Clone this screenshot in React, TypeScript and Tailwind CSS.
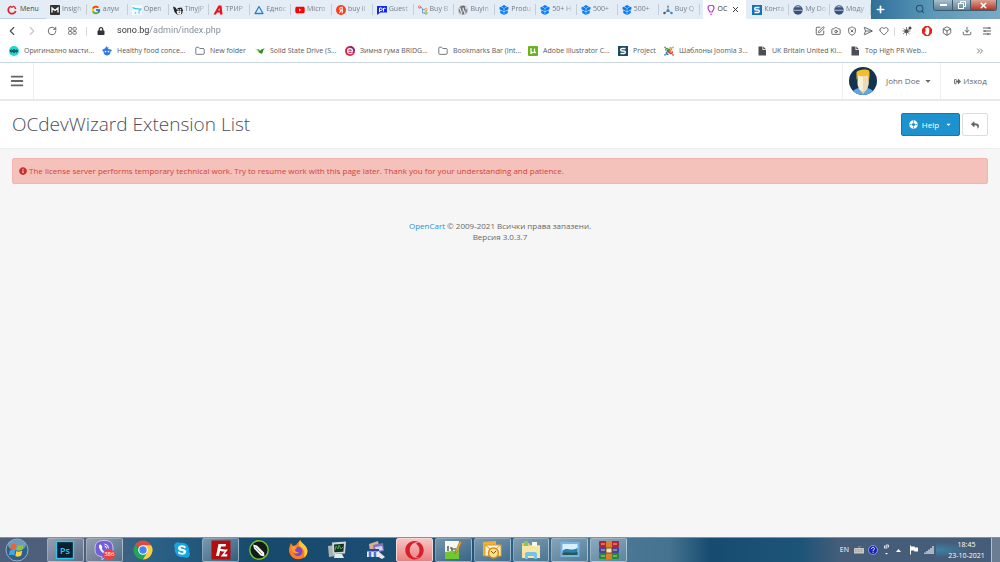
import type { ReactNode } from 'react'
import { FcGoogle } from 'react-icons/fc'
import {
    FaBars,
    FaCaretDown,
    FaInfoCircle,
    FaLock,
    FaOpera,
    FaReply,
    FaSignOutAlt,
    FaSkype,
    FaWordpress,
    FaYoutube,
} from 'react-icons/fa'
import {
    Box,
    Camera,
    ChevronLeft,
    ChevronRight,
    ChevronsRight,
    Download,
    Folder,
    Heart,
    Plus,
    RotateCw,
    Search,
    SendHorizontal,
    ShieldX,
    SquarePen,
    X,
} from 'lucide-react'

const icon = 'w-[10px] h-[10px] shrink-0'

/* ---------- favicons ---------- */

const OperaMenu = () => (
    <svg viewBox="0 0 20 20" className={icon}>
        <path d="M8 2.500A7.600 7.600 0 1 0 17.400 12" fill="none" stroke="#e0222e" strokeWidth="3.400" />
        <path d="M12 2.300a7.600 7.600 0 0 1 5.400 6" fill="none" stroke="#e0222e" strokeWidth="3" />
        <circle cx="10" cy="4" r="2" fill="#e0222e" />
    </svg>
)

const Insight = () => (
    <svg viewBox="0 0 20 20" className={icon}>
        <rect width="20" height="20" rx="2" fill="#333" />
        <path d="M4 15V6l6 5 6-5v9" fill="none" stroke="#fff" strokeWidth="2.600" />
    </svg>
)

const OpenCart = () => (
    <svg viewBox="0 0 20 20" className={icon}>
        <rect width="20" height="20" fill="#f4fbfe" />
        <path d="M1 5c4 3 9 3 17 3-1 2-3 3-5 5" fill="none" stroke="#35c1ee" strokeWidth="2.200" />
        <circle cx="7" cy="16" r="1.600" fill="#35c1ee" />
        <circle cx="14" cy="16" r="1.600" fill="#35c1ee" />
    </svg>
)

const Tiny = () => (
    <svg viewBox="0 0 20 20" className={icon}>
        <path d="M0 3l5 2 2 4 3-3 7-1 3 5-2 8-10 1-5-5z" fill="#222" />
        <path d="M7 13c2-2 8-2 10 0l-1 5H9z" fill="#fff" />
        <circle cx="10" cy="9.500" r="1.500" fill="#fff" />
        <circle cx="15" cy="9.500" r="1.500" fill="#fff" />
        <circle cx="12.500" cy="14.500" r="1.300" fill="#222" />
    </svg>
)

const RedA = () => (
    <svg viewBox="0 0 20 20" className={icon}>
        <path d="M1 19L11 1h6l2 18h-5l-.4-4H8l-2 4zm9-8h3.400L13 6z" fill="#e8121d" fillRule="evenodd" />
    </svg>
)

const Triangle = () => (
    <svg viewBox="0 0 20 20" className={icon}>
        <path d="M10 3l8 14H2z" fill="none" stroke="#2d7fd0" strokeWidth="2.600" strokeLinejoin="round" />
    </svg>
)

const Yandex = () => (
    <svg viewBox="0 0 20 20" className={icon}>
        <circle cx="10" cy="10" r="10" fill="#fc3f1d" />
        <path d="M12.500 16V4.500h-2c-4 0-4 6 0 6h2M10 10.500L7 16" fill="none" stroke="#fff" strokeWidth="2.200" />
    </svg>
)

const GuestPost = () => (
    <svg viewBox="0 0 20 20" className={icon}>
        <path d="M0 2h20v13H6l-4 4H0z" fill="#1527f5" />
        <path d="M5 14V6h3a2.300 2.300 0 0 1 0 5H6m7 2V6m0 2c1-2 3-2 4-1" fill="none" stroke="#fff" strokeWidth="2" />
    </svg>
)

const Tree = () => (
    <svg viewBox="0 0 20 20" className={icon}>
        <path d="M3 5c5 0 6 0 6 5v6h5M9 9h5" fill="none" stroke="#5b94cf" strokeWidth="1.800" />
        <circle cx="3" cy="4" r="2.500" fill="none" stroke="#e3646c" strokeWidth="1.600" />
        <circle cx="16" cy="9" r="2.500" fill="none" stroke="#e59638" strokeWidth="1.600" />
        <circle cx="16" cy="16" r="2.500" fill="none" stroke="#64b057" strokeWidth="1.600" />
    </svg>
)

const Cube = () => (
    <svg viewBox="0 0 20 20" className={icon}>
        <path d="M10 0l5.500 3L10 6.500 4.500 3z" fill="#0a7cf2" />
        <path d="M1 4.500l2.500-1L9.500 7v6L5 10.500 1 8.500z" fill="#0a7cf2" />
        <path d="M19 4.500l-2.500-1L10.500 7v6l4.500-2.500 4-2z" fill="#0a7cf2" />
        <path d="M2.500 10.500l7 3.500v6l-7-4zM17.500 10.500l-7 3.500v6l7-4z" fill="#0a7cf2" />
    </svg>
)

const Molecule = () => (
    <svg viewBox="0 0 20 20" className={icon}>
        <path d="M10 3v8l-7 5m7-5l7 5" fill="none" stroke="#7f8a94" strokeWidth="1.600" />
        <circle cx="10" cy="3" r="2" fill="#7f8a94" />
        <circle cx="10" cy="11" r="3" fill="#3b88c4" />
        <circle cx="3" cy="16" r="2.500" fill="#505a63" />
        <circle cx="17" cy="16" r="2.500" fill="#3b88c4" />
    </svg>
)

const Bulb = () => (
    <svg viewBox="0 0 20 20" className={icon}>
        <path d="M7.500 14c0-3-3.500-4-3.500-8a6 5.500 0 0 1 12 0c0 4-3.500 5-3.500 8zM8 18.500h4" fill="none" stroke="#c13bd3" strokeWidth="2.400" />
    </svg>
)

const LetterS = ({ color }: { color: string }) => (
    <svg viewBox="0 0 20 20" className={icon}>
        <rect width="20" height="20" fill={color} />
        <path d="M15 5H8C4.500 5 4.500 10 8 10h4c3.500 0 3.500 5 0 5H5" fill="none" stroke="#fff" strokeWidth="2.800" />
    </svg>
)

const Globe = () => (
    <svg viewBox="0 0 20 20" className={icon}>
        <circle cx="10" cy="10" r="9.500" fill="#39507c" />
        <path d="M3 5c4-4 10-4 13 0-4-1-9-1-13 0z" fill="#a9b8d4" />
        <path d="M1 10.500h18" stroke="#c4cfe4" strokeWidth="1.800" />
    </svg>
)

const Healthy = () => (
    <svg viewBox="0 0 20 20" className={icon}>
        <path d="M6 5l3-5 1 3 3-1-1 4 6 1 2 3-3 1c0 5-3 8-7 8s-7-3-7-8L0 9l3-3z" fill="#2f7be0" />
        <circle cx="7" cy="11" r="1.700" fill="#fff" />
        <circle cx="13" cy="11" r="1.700" fill="#fff" />
    </svg>
)

const Ojo = () => (
    <svg viewBox="0 0 20 20" className={icon}>
        <circle cx="10" cy="10" r="10" fill="#1fd8cf" />
        <circle cx="5" cy="10" r="2" fill="none" stroke="#0c2b33" strokeWidth="2" />
        <path d="M10 6v8" stroke="#0c2b33" strokeWidth="2.500" />
        <circle cx="15" cy="10" r="2" fill="none" stroke="#0c2b33" strokeWidth="2" />
    </svg>
)

const Leaf = () => (
    <svg viewBox="0 0 20 20" className={icon}>
        <path d="M0 6c4 0 6 1 8 5L7 14C5 9 3 8 0 6z" fill="#d7d84a" />
        <path d="M4 6c4 0 5 2 6 4 2-4 5-4 10-5-2 2-4 3-4 6s-3 5-5 4C7 14 8 9 4 6z" fill="#2f8f2d" />
    </svg>
)

const Emag = () => (
    <svg viewBox="0 0 20 20" className={icon}>
        <circle cx="10" cy="10" r="10" fill="#dd2340" />
        <path d="M10 0a10 10 0 0 1 10 10H10z" fill="#7c2a86" />
        <path d="M5 10.500h10c0-7-10-7-10 0 0 5 6 6 10 3" fill="none" stroke="#fff" strokeWidth="2.200" />
    </svg>
)

const Torrent = () => (
    <svg viewBox="0 0 20 20" className={icon}>
        <rect width="20" height="20" rx="2" fill="#6ab41e" />
        <path d="M6 4v12M6 11c1 3 6 3 7 0V5v6c0 2 1 2 3 2" fill="none" stroke="#fff" strokeWidth="2.500" />
    </svg>
)

const Joomla = () => (
    <svg viewBox="0 0 20 20" className={icon} fill="none" strokeWidth="3">
        <path d="M4 9c-2-3 2-6 4-3l6 6" stroke="#5aa532" />
        <path d="M11 4c3-2 6 2 3 4l-6 6" stroke="#f9912a" />
        <path d="M16 11c2 3-2 6-4 3L6 8" stroke="#e0402d" />
        <path d="M9 16c-3 2-6-2-3-4l6-6" stroke="#2a80c4" />
        <g strokeWidth="3.500" strokeLinecap="round">
            <path d="M2 2.500h.1" stroke="#5aa532" />
            <path d="M18 2.500h.1" stroke="#f9912a" />
            <path d="M18 17.500h.1" stroke="#e0402d" />
            <path d="M2 17.500h.1" stroke="#2a80c4" />
        </g>
    </svg>
)

const PageFile = () => (
    <svg viewBox="0 0 20 20" className={icon}>
        <path d="M3 1h8v7h7v11H3z" fill="#4b4f54" />
        <path d="M12.500 1L18 6.500h-5.500z" fill="#4b4f54" />
    </svg>
)

const FolderIcon = () => <Folder className="w-[10px] h-[10px] shrink-0 text-[#5a6066]" strokeWidth={2} />

/* ---------- data ---------- */

interface Tab {
    title: string
    icon: ReactNode
    active?: boolean
}

const tabs: Tab[] = [
    { title: 'Insigh', icon: <Insight /> },
    { title: 'алум', icon: <FcGoogle className={icon} /> },
    { title: 'Open', icon: <OpenCart /> },
    { title: 'TinyJP', icon: <Tiny /> },
    { title: 'ТРИР', icon: <RedA /> },
    { title: 'Еднос', icon: <Triangle /> },
    { title: 'Micro', icon: <FaYoutube className="w-[10px] h-[10px] shrink-0 text-[#f00]" /> },
    { title: 'buy li', icon: <Yandex /> },
    { title: 'Guest', icon: <GuestPost /> },
    { title: 'Buy B', icon: <Tree /> },
    { title: 'Buyin', icon: <FaWordpress className="w-[10px] h-[10px] shrink-0 text-[#6c6c6c]" /> },
    { title: 'Produ', icon: <Cube /> },
    { title: '50+ H', icon: <Cube /> },
    { title: '500+', icon: <Cube /> },
    { title: '500+', icon: <Cube /> },
    { title: 'Buy Q', icon: <Molecule /> },
    { title: 'OC', icon: <Bulb />, active: true },
    { title: 'Конта', icon: <LetterS color="#1273b8" /> },
    { title: 'My Do', icon: <Globe /> },
    { title: 'Моду', icon: <Globe /> },
]

const bookmarks = [
    { title: 'Оригинално масти...', icon: <Ojo />, width: 'w-[93px]' },
    { title: 'Healthy food conce...', icon: <Healthy />, width: 'w-[93px]' },
    { title: 'New folder', icon: <FolderIcon />, width: 'w-[60px]' },
    { title: 'Solid State Drive (S...', icon: <Leaf />, width: 'w-[90px]' },
    { title: 'Зимна гума BRIDG...', icon: <Emag />, width: 'w-[93px]' },
    { title: 'Bookmarks Bar (Int...', icon: <FolderIcon />, width: 'w-[90px]' },
    { title: 'Adobe Illustrator C...', icon: <Torrent />, width: 'w-[90px]' },
    { title: 'Project', icon: <LetterS color="#1d4a5c" />, width: 'w-[46px]' },
    { title: 'Шаблоны Joomla 3...', icon: <Joomla />, width: 'w-[93px]' },
    { title: 'UK Britain United Ki...', icon: <PageFile />, width: 'w-[93px]' },
    { title: 'Top High PR Web...', icon: <PageFile />, width: 'w-[93px]' },
]

/* ---------- taskbar icons ---------- */

const task = 'w-[20px] h-[20px]'

const Photoshop = () => (
    <svg viewBox="0 0 20 20" className={task}>
        <rect x="1.500" y="1.500" width="17" height="17" fill="#0b1f2e" stroke="#31c5f0" strokeWidth="1.400" />
        <text x="10" y="13.500" textAnchor="middle" fontSize="9" fontWeight="600" fill="#31c5f0">Ps</text>
    </svg>
)

const Viber = () => (
    <span className="relative">
        <svg viewBox="0 0 20 20" className={task}>
            <path d="M10 .5c6 0 9 2 9 8.500 0 6-3 8-8 8l-3 3v-3.300C3 16 1 14 1 9 1 2.500 4 .5 10 .5z" fill="#7360d6" stroke="#ddd8f8" strokeWidth=".8" />
            <path d="M6 4.500c-2 1-1 4 1.500 7s5 4 6.500 2c1-1-2-3-3-2-1 .8-4-3-3-3.500C9 7 7 4 6 4.500z" fill="#fff" />
            <path d="M10.500 4q4 .5 4 4.500M10.500 6q2 .3 2 2.500" fill="none" stroke="#fff" />
        </svg>
        <span className="absolute left-[9px] top-[10px] h-[9px] px-px rounded-full bg-[#ee3f3f] text-white text-[6px] leading-[9px]">386</span>
    </span>
)

const Chrome = () => (
    <svg viewBox="0 0 20 20" className={task}>
        <path d="M10 10L1.800 5.200A9.500 9.500 0 0 1 18.200 5.200z" fill="#dd4b3e" />
        <path d="M10 10V5.200h8.200A9.500 9.500 0 0 1 10 19.500z" fill="#fccd43" />
        <path d="M10 10l4.200 2.400L10 19.500A9.500 9.500 0 0 1 1.800 5.200z" fill="#27a358" />
        <circle cx="10" cy="10" r="4.800" fill="#fff" />
        <circle cx="10" cy="10" r="3.700" fill="#4285f4" />
    </svg>
)

const FileZilla = () => (
    <svg viewBox="0 0 20 20" className={task}>
        <rect x=".5" y=".5" width="19" height="19" fill="#b30d0d" />
        <path d="M5 16L7.500 4H15l-.5 2.500H10L9.500 9h3l-.5 2H9l-1 5z" fill="#fff" />
        <path d="M10.500 9.500h6.500l-3.700 4.800h3.200l-.5 2.200H9.700l4-5h-3.200z" fill="#fff" />
    </svg>
)

const Corel = () => (
    <svg viewBox="0 0 20 20" className={task}>
        <circle cx="10" cy="10" r="9.200" fill="#161a16" stroke="#77c72b" strokeWidth="1.400" />
        <path d="M4 4.500l4 1 7 7 .5 4-4-1-6.500-7z" fill="#f3f3f3" />
        <path d="M6 7l7 7" stroke="#999" strokeWidth="1" />
    </svg>
)

const Firefox = () => (
    <svg viewBox="0 0 20 20" className={task}>
        <path d="M3 3l2 3 3-1c1-2 3-3 4-5 1 3 7 5 7.500 11A9.300 9.300 0 0 1 1 11C.8 8 2 5 3 3z" fill="#ff7a22" />
        <path d="M12 0c1 3 7 5 7.500 11a8 8 0 0 1-4 7c2-5 1-9-4-12C10 4 12 2 12 0z" fill="#ffc935" />
        <circle cx="10" cy="11.500" r="4.500" fill="#7747d8" />
        <path d="M3 7c2-1 5-1 6 1L7 9.500c0 2 2 3 4 2.500-2 3-7 2-8-5z" fill="#ff9a33" />
    </svg>
)

const Monitor = () => (
    <svg viewBox="0 0 20 20" className={task}>
        <path d="M1 6l7-1 1 11-7 1z" fill="#a9b2b4" />
        <path d="M5 2.500l14-1-1 12-12 .5z" fill="#cfd5d4" />
        <path d="M7 4.500l10-.7-.6 8-9 .4z" fill="#173222" />
        <path d="M8 10l1-4 2 3 1-4 2 4 2-2" fill="none" stroke="#43a558" strokeWidth="1" />
        <path d="M8 14h7l2 4H7z" fill="#e6eae8" />
    </svg>
)

const Installer = () => (
    <svg viewBox="0 0 20 20" className={task}>
        <path d="M3 4l9-3 2 9-10 2z" fill="#d7b08f" />
        <path d="M7 5l10-2 1 8-10 2z" fill="#8b71b6" />
        <path d="M9 7l7-1 1 4-7 1z" fill="#c9d7f2" />
        <path d="M1 9h12v8H1z" fill="#e8ebf6" />
        <path d="M1 9h12v2.500H1z" fill="#29469b" />
        <path d="M4 12v5m5-5v5" stroke="#4a76c9" strokeWidth="2.500" />
        <path d="M12 11l7 6-3 2-5-3z" fill="#e9e9ee" />
    </svg>
)

const Notepad = () => (
    <svg viewBox="0 0 20 20" className={task}>
        <rect x="2" y="1" width="14" height="18" fill="#f5f8ee" />
        <path d="M2 12l14-2v9H2z" fill="#70c832" />
        <path d="M5 6v5m2-3h2v3m1-2h3" stroke="#333" strokeWidth="1.200" fill="none" />
        <path d="M17 1l2 1-5 10-2 2 .5-3z" fill="#eaa52e" stroke="#8b5f21" strokeWidth=".5" />
    </svg>
)

const Outlook = () => (
    <svg viewBox="0 0 20 20" className={task}>
        <path d="M1 2l13-1v13L1 16z" fill="#f1b133" />
        <rect x="3" y="5" width="16" height="11" fill="#fff5dd" stroke="#d99b29" />
        <path d="M3 5l8 6 8-6" fill="none" stroke="#d99b29" />
        <circle cx="11.500" cy="13" r="5" fill="#fce08a" stroke="#d98c16" strokeWidth="1.500" />
        <path d="M9 11l2.500 2.500L14 11" fill="none" stroke="#7a4b09" />
    </svg>
)

const Explorer = () => (
    <svg viewBox="0 0 20 20" className={task}>
        <path d="M1 3h7l1 2h10v13H1z" fill="#e9cb6f" />
        <path d="M3 1h4v6H3z" fill="#8fbf61" />
        <path d="M11 2h5v4h-5z" fill="#f7f7f2" />
        <path d="M1 6h18v12H1z" fill="#f8e6a1" />
        <path d="M4 19v-5q0-2 2-2h8q2 0 2 2v5h-3v-3H7v3z" fill="#72c4ea" />
    </svg>
)

const Picture = () => (
    <svg viewBox="0 0 20 20" className={task}>
        <rect x=".5" y="2" width="19" height="15" fill="#78b4e2" />
        <rect x="2.500" y="4" width="15" height="11" fill="#d7efff" />
        <path d="M2.500 11c4-5 7 1 15-3v7h-15z" fill="#2a7fb4" />
        <path d="M2.500 13c5-2 9 1 15-1v3h-15z" fill="#275a48" />
    </svg>
)

const WinRar = () => (
    <svg viewBox="0 0 20 20" className={task}>
        <rect y="1" width="20" height="6" rx="1" fill="#b81f3a" />
        <rect y="7" width="20" height="6" rx="1" fill="#3f45a8" />
        <rect y="13" width="20" height="6" rx="1" fill="#238a3c" />
        <rect x="7" y="1" width="6" height="18" fill="#d9822a" />
        <path d="M2 4h4m8 0h4M2 10h4m8 0h4M2 16h4m8 0h4" stroke="#e6c76b" />
        <rect x="7" y="8" width="6" height="5" fill="#f1e3c2" stroke="#7d4b14" />
    </svg>
)

const apps = [
    { name: 'Photoshop', icon: <Photoshop />, open: true },
    { name: 'Viber', icon: <Viber />, open: true },
    { name: 'Chrome', icon: <Chrome /> },
    { name: 'Skype', icon: <FaSkype className="w-[18px] h-[18px] text-[#18a5e4] bg-[radial-gradient(circle,white_50%,transparent_51%)]" /> },
    { name: 'FileZilla', icon: <FileZilla />, open: true },
    { name: 'CorelDRAW', icon: <Corel /> },
    { name: 'Firefox', icon: <Firefox /> },
    { name: 'Monitor', icon: <Monitor /> },
    { name: 'Installer', icon: <Installer /> },
    { name: 'Opera', icon: <FaOpera className="w-[19px] h-[19px] text-[#d81f2c]" />, alert: true },
    { name: 'Notepad++', icon: <Notepad />, open: true },
    { name: 'Outlook', icon: <Outlook />, open: true },
    { name: 'Explorer', icon: <Explorer />, open: true },
    { name: 'Pictures', icon: <Picture />, open: true },
    { name: 'WinRAR', icon: <WinRar />, open: true },
]

/* ---------- browser ---------- */

const TabStrip = () => (
    <div className="flex h-[19px] text-[7px] bg-[#e4edf5]">
        <button className="flex items-center gap-[3px] w-[46px] pl-[7px] pt-px text-[#3d4650] border-b border-[#bdd3e4]">
            <OperaMenu />
            Menu
        </button>
        <div className="flex flex-1 min-w-0">
            {tabs.map((tab, i) =>
                tab.active ? (
                    <div key={i} className="flex flex-1 min-w-0 items-center gap-[2px] pl-[3px] ml-[3px] mr-[2px] bg-white text-[#333]">
                        {tab.icon}
                        <span className="w-[11px]">{tab.title}</span>
                        <button aria-label="Close tab">
                            <X className="w-[9px] h-[9px] text-[#333]" strokeWidth={2.5} />
                        </button>
                    </div>
                ) : (
                    <div key={i} className="flex flex-1 min-w-0 items-center text-[#6f7b87]">
                        <div className="flex flex-1 min-w-0 items-center gap-[2px] pl-[4px] border-r border-[#c3ced9]">
                            {tab.icon}
                            <span className="flex-1 whitespace-nowrap [mask-image:linear-gradient(to_right,black_50%,transparent)]">
                                {tab.title}
                            </span>
                        </div>
                    </div>
                )
            )}
        </div>
        <div className="flex w-[129px] items-start bg-linear-to-r from-[#2f7099] via-[#5d9abb] to-[#7ba9c2]">
            <button aria-label="New tab" className="p-[4px]">
                <Plus className="w-[11px] h-[11px] text-white" strokeWidth={3.5} />
            </button>
            <button aria-label="Search tabs" className="ml-auto mr-[8px] mt-[4px]">
                <Search className="w-[10px] h-[10px] text-[#25506b]" strokeWidth={2.5} />
            </button>
            <div className="flex h-[11px] mr-[3px] rounded-b-[3px] overflow-hidden border border-t-0 border-[#3d5a6e]">
                <button aria-label="Minimize" className="w-[18px] grid place-items-center bg-linear-to-b from-[#a9bfcd] to-[#5f8199]">
                    <span className="w-[7px] h-[2px] bg-white" />
                </button>
                <button aria-label="Restore" className="w-[18px] grid place-items-center border-l border-[#3d5a6e] bg-linear-to-b from-[#a9bfcd] to-[#5f8199]">
                    <svg viewBox="0 0 8 8" className="w-[8px] h-[8px]" fill="none" stroke="#fff">
                        <path d="M2.500 2.500v-2h5v5h-2" />
                        <rect x=".5" y="2.500" width="5" height="5" />
                    </svg>
                </button>
                <button aria-label="Close" className="w-[26px] grid place-items-center border-l border-[#3d5a6e] bg-linear-to-b from-[#dba296] to-[#b2301b]">
                    <X className="w-[9px] h-[9px] text-white" strokeWidth={4} />
                </button>
            </div>
        </div>
    </div>
)

const tool = 'grid place-items-center w-[16px] h-[20px]'
const toolIcon = 'w-[10px] h-[10px]'

const AddressBar = () => (
    <div className="flex items-center h-[24px] pl-[2px] pr-[3px] text-[#4a5158]">
        <button aria-label="Back" className="w-[20px] grid place-items-center">
            <ChevronLeft className="w-[14px] h-[14px]" />
        </button>
        <button aria-label="Forward" className="w-[20px] grid place-items-center text-[#c3c8cc]">
            <ChevronRight className="w-[14px] h-[14px]" />
        </button>
        <button aria-label="Reload" className="w-[20px] grid place-items-center">
            <RotateCw className="w-[10px] h-[10px]" />
        </button>
        <button aria-label="Speed dial" className="w-[20px] grid place-items-center">
            <svg viewBox="0 0 18 16" className="w-[9px] h-[8px]" fill="none" stroke="currentColor" strokeWidth="1.500">
                <rect x="1" y="1" width="6.500" height="5.500" rx="1.500" />
                <rect x="10" y="1" width="6.500" height="5.500" rx="1.500" />
                <rect x="1" y="9" width="6.500" height="5.500" rx="1.500" />
                <rect x="10" y="9" width="6.500" height="5.500" rx="1.500" />
            </svg>
        </button>
        <span className="w-px h-[9px] mx-[4px] bg-[#d5dade]" />
        <FaLock className="w-[8px] h-[8px] mx-[6px] text-[#333]" />
        <input
            aria-label="Address"
            defaultValue="sono.bg/admin/index.php"
            className="flex-1 min-w-0 ml-[6px] font-['Roboto',sans-serif] text-[9px] text-transparent bg-clip-text bg-[linear-gradient(to_right,#333_32px,#7d8893_32px)] outline-none"
        />
        <button aria-label="Edit page" className={tool}><SquarePen className={toolIcon} /></button>
        <button aria-label="Snapshot" className={tool}><Camera className={toolIcon} /></button>
        <button aria-label="Blocker" className={tool}><ShieldX className={toolIcon} /></button>
        <button aria-label="Send" className={tool}><SendHorizontal className={toolIcon} /></button>
        <button aria-label="Save" className={tool}><Heart className={toolIcon} /></button>
        <span className="w-px h-[9px] mx-[2px] bg-[#d5dade]" />
        <button aria-label="Extension" className="grid place-items-center w-[20px]">
            <svg viewBox="0 0 20 20" className={toolIcon}>
                <path d="M9 2v17M3 5l12 11M2 16L17 4M1 10h16" stroke="#777" strokeWidth="1.800" />
                <circle cx="9" cy="10.500" r="4" fill="#555" />
                <circle cx="16" cy="4" r="3" fill="#444" />
            </svg>
        </button>
        <button aria-label="Ad block" className="grid place-items-center w-[20px]">
            <svg viewBox="0 0 20 20" className={toolIcon}>
                <path d="M6 0h8l6 6v8l-6 6H6l-6-6V6z" fill="#e2231a" />
                <path d="M7 4h1.500V3H10V2h1.500v1H13v1.500h1.500V12c0 4-2 6-4 6-3 0-4-3-5.500-6l2-.5z" fill="#fff" />
            </svg>
        </button>
        <button aria-label="Extensions" className="grid place-items-center w-[20px]"><Box className={toolIcon} /></button>
        <button aria-label="Downloads" className="grid place-items-center w-[20px]"><Download className={toolIcon} /></button>
        <button aria-label="Easy setup" className="grid place-items-center w-[20px]">
            <svg viewBox="0 0 20 20" className={toolIcon} fill="none" stroke="currentColor" strokeWidth="1.800">
                <path d="M2 4h16M2 10h16M2 16h16M14 2v4M6 8v4M12 14v4" />
            </svg>
        </button>
    </div>
)

const BookmarksBar = () => (
    <nav className="flex items-center h-[20px] pl-[9px] pr-[15px] pb-[3px] text-[7px] text-[#555b61] border-b border-[#c9d6e0]">
        {bookmarks.map((b) => (
            <a key={b.title} href="#" className={`flex items-center gap-[5px] whitespace-nowrap ${b.width}`}>
                {b.icon}
                {b.title}
            </a>
        ))}
        <button aria-label="More bookmarks" className="ml-auto">
            <ChevronsRight className="w-[10px] h-[10px]" />
        </button>
    </nav>
)

/* ---------- admin page ---------- */

const Avatar = () => (
    <svg viewBox="0 0 56 56" className="w-[28px] h-[28px]">
        <clipPath id="avatar">
            <circle cx="28" cy="28" r="28" />
        </clipPath>
        <g clipPath="url(#avatar)">
            <rect width="56" height="56" fill="#12344f" />
            <path d="M4 56c2-9 8-12 18-15h12c10 3 16 6 18 15z" fill="#5da6e6" />
            <path d="M20 36h16v8l-8 10-8-10z" fill="#e8cda5" />
            <path d="M17 14h22v18c0 9-5 16-11 16s-11-7-11-16z" fill="#fbeed6" />
            <path d="M28 14h11v18c0 9-5 16-11 16z" fill="#f1d9b5" />
            <path d="M15 26V10c4-5 18-7 25-3 2 5 1 13 0 19l-3-9c-7 2-14 2-19 0z" fill="#f5bd27" />
        </g>
    </svg>
)

const LifeRing = () => (
    <svg viewBox="0 0 20 20" className="w-[9px] h-[9px] mr-[4px]">
        <circle cx="10" cy="10" r="6.500" fill="none" stroke="#fff" strokeWidth="6" />
        <path d="M10 1v5M10 14v5M1 10h5M14 10h5" stroke="#1e91cf" strokeWidth="1.600" />
    </svg>
)

const Admin = () => (
    <main className="flex-1 bg-[#f6f6f6] text-[8px] text-[#666]">
        <header className="flex h-[38px] bg-white border-b-2 border-[#e8e8e8]">
            <button aria-label="Menu" className="w-[34px] grid place-items-center border-r border-[#eee]">
                <FaBars className="w-[14px] h-[14px] text-[#666]" />
            </button>
            <button className="flex items-center ml-auto w-[98px] pl-[6px] border-l border-[#eee]">
                <Avatar />
                <span className="ml-[9px]">John Doe</span>
                <FaCaretDown className="w-[8px] h-[8px] ml-[4px]" />
            </button>
            <a href="#" className="flex items-center justify-center gap-[2px] w-[60px] border-l border-[#eee]">
                <FaSignOutAlt className="w-[7px] h-[7px]" />
                Изход
            </a>
        </header>

        <div className="flex items-center h-[48px] px-[12px] bg-white border-b border-[#eee]">
            <h1 className="text-[19px] font-light text-[#4c4d5a]">OCdevWizard Extension List</h1>
            <button className="flex items-center justify-center ml-auto w-[59px] h-[23px] rounded-[2px] bg-[#1e91cf] border border-[#1978ab] text-white">
                <LifeRing />
                Help
                <FaCaretDown className="w-[7px] h-[7px] ml-[6px]" />
            </button>
            <a href="#" aria-label="Back" className="grid place-items-center ml-[2px] w-[26px] h-[23px] rounded-[2px] bg-white border border-[#ddd]">
                <FaReply className="w-[8px] h-[8px]" />
            </a>
        </div>

        <div role="alert" className="flex items-center gap-[2px] h-[26px] mx-[12px] mt-[9px] px-[6px] rounded-[2px] bg-[#f5c1bb] border border-[#f3b5ad] text-[#d04437]">
            <FaInfoCircle className="w-[8px] h-[8px] text-[#c9302c]" />
            The license server performs temporary technical work. Try to resume work with this page later. Thank you for your understanding and patience.
        </div>

        <footer className="mt-[36px] text-center leading-[11px]">
            <a href="#" className="text-[#1e91cf]">OpenCart</a> © 2009-2021 Всички права запазени.
            <br />
            Версия 3.0.3.7
        </footer>
    </main>
)

/* ---------- taskbar ---------- */

const Grip = () => (
    <span className="w-[6px] h-[20px] bg-[radial-gradient(#142f45_35%,transparent_40%)] bg-[size:2px_2px]" />
)

const Taskbar = () => (
    <div className="flex items-center h-[25px] border-t border-[#7d93a3] bg-[linear-gradient(to_right,#4d5f7b_0%,#4d5f7b_10%,#2b6285_15%,#16496c_26%,#1d5075_45%,#4a7896_62%,#44738f_67%,#174c70_71%,#1c5478_80%,#465d79_84%,#465d79_100%)] text-white text-[7px]">
        <button aria-label="Start" className="ml-[5px]">
            <svg viewBox="0 0 24 24" className="w-[24px] h-[24px]">
                <circle cx="12" cy="12" r="11" fill="#2c5f8a" stroke="#8fb0c6" />
                <ellipse cx="12" cy="7" rx="9" ry="5.500" fill="#9dbfd5" opacity=".6" />
                <path d="M6 7q3-2 5.500-.5l-1 5Q8 10 5 11.500z" fill="#f0652b" />
                <path d="M12.500 7q3 1.500 6-.5l-1 5q-3 2-6 .5z" fill="#8dc53e" />
                <path d="M4.800 12.500q3-1.500 5.500 0l-1 5q-3-1.500-5.500 0z" fill="#3fa9e8" />
                <path d="M11.300 13q3 1.500 6-.5l-1 5q-3 2-6 .5z" fill="#fdd23a" />
            </svg>
        </button>
        <span className="ml-[7px] mr-[5px] flex"><Grip /></span>
        <div className="grid grid-cols-15 gap-x-[2px] w-[580px] h-full">
            {apps.map((app) => (
                <button
                    key={app.name}
                    aria-label={app.name}
                    className={`grid place-items-center rounded-[2px] ${
                        app.alert
                            ? 'bg-linear-to-b from-[#f7c3c3] to-[#e88181] border border-[#f8d5d5]'
                            : app.open
                              ? 'bg-linear-to-br from-white/40 to-white/10 border border-white/35'
                              : ''
                    }`}
                >
                    {app.icon}
                </button>
            ))}
        </div>
        <div className="flex items-center h-full ml-auto">
            <Grip />
            <span className="ml-[5px]">EN</span>
            <svg viewBox="0 0 20 16" className="w-[10px] h-[8px] ml-[5px]">
                <path d="M10 4V0h5" fill="none" stroke="#ccc" />
                <rect y="4" width="20" height="11" rx="1" fill="#c9c9c4" />
                <path d="M2 7.500h16M2 10.500h16" stroke="#777" strokeDasharray="2 1" />
            </svg>
            <svg viewBox="0 0 20 20" className="w-[10px] h-[10px] ml-[4px]">
                <circle cx="10" cy="10" r="9" fill="#1526b8" stroke="#aab4ee" strokeWidth="1.500" />
                <path d="M7 8c0-4 6-4 6-.5 0 2-3 2-3 4.500m0 1.500v2" fill="none" stroke="#fff" strokeWidth="2" />
            </svg>
            <svg viewBox="0 0 10 24" className="w-[5px] h-[12px] ml-[6px]" fill="none" stroke="#fff" strokeWidth="1.500">
                <rect x="1" y="4" width="5" height="4" />
                <path d="M4 2h5v5" />
                <path d="M2 18h6l-3 3z" fill="#fff" stroke="none" />
            </svg>
            <svg viewBox="0 0 10 6" className="w-[5px] h-[3px] ml-[7px]"><path d="M5 0l5 6H0z" fill="#fff" /></svg>
            <svg viewBox="0 0 20 20" className="w-[10px] h-[10px] ml-[8px]">
                <path d="M3 1v18" stroke="#fff" strokeWidth="2" />
                <path d="M4 3h7l1 2h6v8h-7l-1-2H4z" fill="#fff" />
            </svg>
            <svg viewBox="0 0 20 20" className="w-[10px] h-[10px] ml-[5px]">
                <path d="M2 18v-3m4 3v-6m4 6V9m4 9V6m4 12V2" stroke="#e6ebef" strokeWidth="2.500" />
            </svg>
            <div className="w-[55px] ml-[2px] h-full pl-[6px] text-center leading-[11px] pt-px bg-[radial-gradient(ellipse_at_left,#3b83a5_0%,transparent_45%)]">
                <div>18:45</div>
                <div>23-10-2021</div>
            </div>
            <button aria-label="Show desktop" className="w-[9px] h-full border-l border-white/50 bg-white/20" />
        </div>
    </div>
)

export default function App() {
    return (
        <div className="flex flex-col min-h-screen bg-white font-['Open_Sans','Noto_Sans',sans-serif]">
            <TabStrip />
            <AddressBar />
            <BookmarksBar />
            <Admin />
            <Taskbar />
        </div>
    )
}
